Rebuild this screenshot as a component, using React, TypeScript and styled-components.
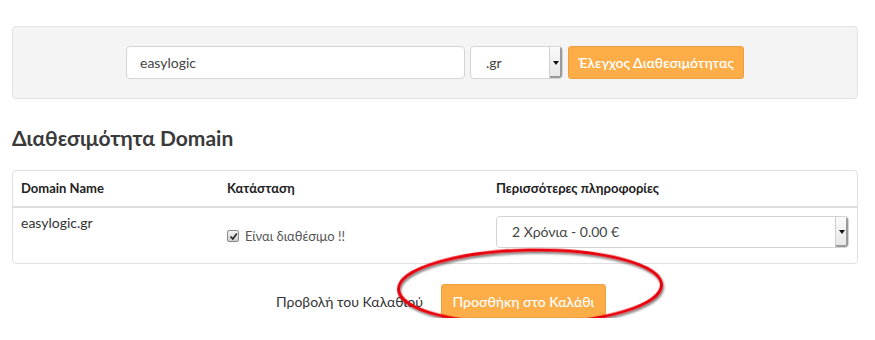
import React from "react";
import styled, { createGlobalStyle } from "styled-components";

const GlobalStyle = createGlobalStyle`
  body {
    margin: 0;
    background: #ffffff;
    font-family: "Lato", "Open Sans", "Noto Sans", sans-serif;
    color: #333333;
  }
`;

const Page = styled.div`
  padding: 26px 17px 0 12px;
`;

const SearchPanel = styled.div`
  background: #f4f4f4;
  border: 1px solid #e3e3e3;
  border-radius: 4px;
  padding: 19px 0;
  display: flex;
  justify-content: center;
  gap: 5px;
`;

const DomainInput = styled.div`
  width: 339px;
  height: 33px;
  box-sizing: border-box;
  background: #fff;
  border: 1px solid #d4d4d4;
  border-radius: 4px;
  padding: 0 13px;
  display: flex;
  align-items: center;
  font-size: 14px;
  color: #444;
`;

const SelectBox = styled.div<{ $width: number; $height: number }>`
  width: ${(p) => p.$width}px;
  height: ${(p) => p.$height}px;
  box-sizing: border-box;
  background: #fff;
  border: 1px solid #d4d4d4;
  border-radius: 4px;
  display: flex;
  align-items: stretch;
  font-size: 14px;
  color: #444;
  overflow: hidden;
`;

const SelectValue = styled.span<{ $pad: number }>`
  flex: 1;
  display: flex;
  align-items: center;
  padding-left: ${(p) => p.$pad}px;
`;

const SelectArrow = styled.span`
  width: 12px;
  display: flex;
  align-items: center;
  justify-content: center;
  background: linear-gradient(#fafafa, #e6e6e6);
  border-left: 1px solid #d0d0d0;
  box-shadow: inset -2px -2px 0 #9a9a9a;

  &::after {
    content: "";
    border-left: 3px solid transparent;
    border-right: 3px solid transparent;
    border-top: 4px solid #111;
  }
`;

const OrangeButton = styled.div<{ $width: number; $height: number; $bold?: boolean }>`
  width: ${(p) => p.$width}px;
  height: ${(p) => p.$height}px;
  box-sizing: border-box;
  background: #fdad47;
  border: 1px solid #eea040;
  border-radius: 3px;
  color: #fff;
  font-size: 14px;
  font-weight: ${(p) => (p.$bold ? 600 : 500)};
  display: flex;
  align-items: center;
  justify-content: center;
`;

const Heading = styled.h2`
  margin: 26px 0 19px;
  font-size: 21px;
  line-height: 26px;
  font-weight: 700;
  color: #3a3a3a;
`;

const TablePanel = styled.div`
  border: 1px solid #e0e0e0;
  border-radius: 4px;
`;

const Row = styled.div<{ $head?: boolean }>`
  display: grid;
  grid-template-columns: 206px 269px 1fr;
  border-bottom: ${(p) => (p.$head ? "2px solid #dddddd" : "none")};
  height: ${(p) => (p.$head ? 35 : 55)}px;
`;

const Cell = styled.div<{ $head?: boolean; $top: number }>`
  padding: ${(p) => p.$top}px 8px 0 8px;
  font-size: ${(p) => (p.$head ? 13 : 14)}px;
  font-weight: ${(p) => (p.$head ? 700 : 400)};
  color: ${(p) => (p.$head ? "#222" : "#333")};
  line-height: 20px;
`;

const Status = styled.label`
  display: flex;
  align-items: center;
  gap: 6px;
  font-size: 13px;
  color: #555;
`;

const Check = styled.span`
  width: 10px;
  height: 10px;
  border: 1px solid #8a8a8a;
  border-radius: 2px;
  background: linear-gradient(#f4f4f4, #cfcfcf);
  display: flex;
  align-items: center;
  justify-content: center;
`;

const Footer = styled.div`
  position: relative;
  display: flex;
  justify-content: center;
  align-items: center;
  gap: 18px;
  padding: 20px 0 0 12px;
`;

const CartLink = styled.span`
  font-size: 14px;
  color: #333;
`;

const Annotation = styled.svg`
  position: absolute;
  left: 366px;
  top: -22px;
  overflow: visible;
  pointer-events: none;
`;

export default function App() {
  return (
    <Page>
      <GlobalStyle />
      <SearchPanel>
        <DomainInput>easylogic</DomainInput>
        <SelectBox $width={93} $height={33}>
          <SelectValue $pad={15}>.gr</SelectValue>
          <SelectArrow />
        </SelectBox>
        <OrangeButton $width={176} $height={33} $bold>
          Έλεγχος Διαθεσιμότητας
        </OrangeButton>
      </SearchPanel>

      <Heading>Διαθεσιμότητα Domain</Heading>

      <TablePanel>
        <Row $head>
          <Cell $head $top={7}>Domain Name</Cell>
          <Cell $head $top={7}>Κατάσταση</Cell>
          <Cell $head $top={7}>Περισσότερες πληροφορίες</Cell>
        </Row>
        <Row>
          <Cell $top={5}>easylogic.gr</Cell>
          <Cell $top={18}>
            <Status>
              <Check>
                <svg width="9" height="9" viewBox="0 0 9 9">
                  <path d="M1.5 4.5 L3.8 7 L7.8 1.5" fill="none" stroke="#222" strokeWidth="1.6" />
                </svg>
              </Check>
              Είναι διαθέσιμο !!
            </Status>
          </Cell>
          <Cell $top={8}>
            <SelectBox $width={353} $height={32}>
              <SelectValue $pad={15}>2 Χρόνια - 0.00 €</SelectValue>
              <SelectArrow />
            </SelectBox>
          </Cell>
        </Row>
      </TablePanel>

      <Footer>
        <CartLink>Προβολή του Καλαθιού</CartLink>
        <OrangeButton $width={165} $height={34}>
          Προσθήκη στο Καλάθι
        </OrangeButton>
        <Annotation width="300" height="90">
          <defs>
            <filter id="sh" x="-10%" y="-30%" width="120%" height="160%">
              <feDropShadow dx="1" dy="2" stdDeviation="1.2" floodColor="#000" floodOpacity="0.55" />
            </filter>
          </defs>
          <ellipse
            cx="152"
            cy="45"
            rx="131.5"
            ry="37"
            fill="none"
            stroke="#e8000b"
            strokeWidth="3"
            filter="url(#sh)"
            transform="rotate(-1 152 45)"
          />
        </Annotation>
      </Footer>
    </Page>
  );
}
